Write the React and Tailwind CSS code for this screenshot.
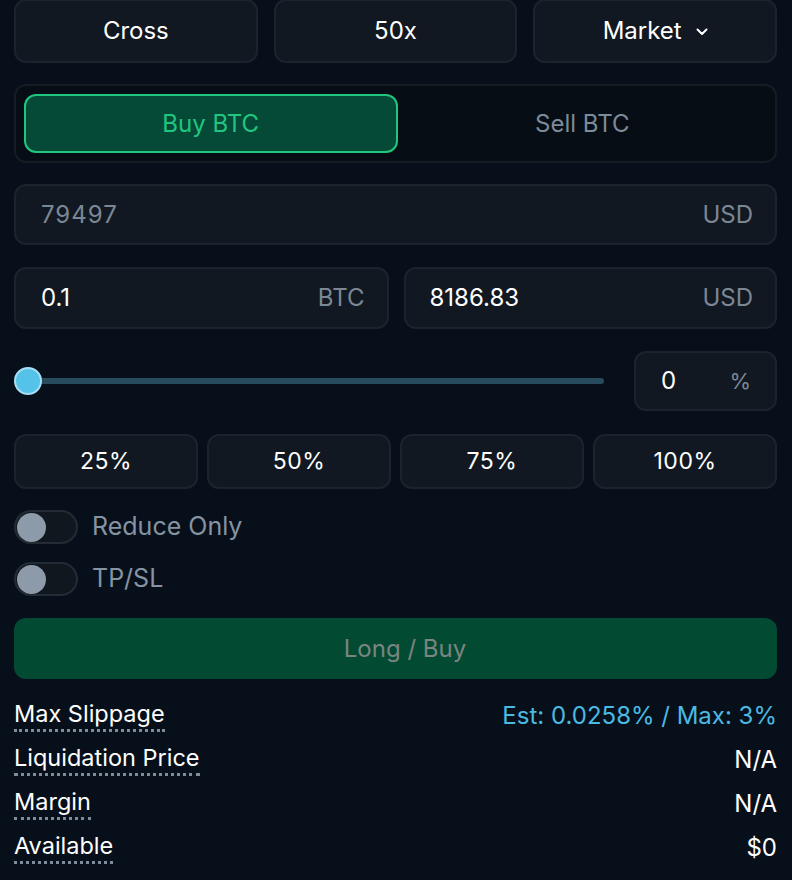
import React, { useState } from 'react';

const box = 'bg-[#111821] border-2 border-[#1c232c] rounded-[12px]';

function Toggle({ label }) {
  return (
    <div className="flex items-center h-[34px]">
      <div className="w-[64px] h-[34px] rounded-full bg-[#10171f] border-2 border-[#232b34] flex items-center px-[1px]">
        <div className="w-[29px] h-[29px] rounded-full bg-[#8d9aa9]" />
      </div>
      <span className="ml-[14px] text-[25px] text-[#8593a2]">{label}</span>
    </div>
  );
}

function InfoRow({ label, value, valueClass }) {
  return (
    <div className="flex items-center justify-between h-[44px]">
      <span className="text-[23.5px] text-white leading-[28px] border-b-[3px] border-dotted border-[#7e8d9c] pb-[1px]">
        {label}
      </span>
      <span className={`text-[24px] leading-[28px] ${valueClass}`}>{value}</span>
    </div>
  );
}

export default function App() {
  const [side, setSide] = useState('buy');
  const pcts = ['25%', '50%', '75%', '100%'];

  return (
    <div
      className="w-[792px] h-[880px] bg-[#07101a] px-[14px] pr-[15px] overflow-hidden"
      style={{ fontFamily: 'Inter, "Noto Sans", sans-serif' }}
    >
      {/* margin / leverage / order type */}
      <div className="flex gap-[16px] h-[64px] -mt-[1px]">
        <button className={`${box} flex-1 text-white text-[24px]`}>Cross</button>
        <button className={`${box} flex-1 text-white text-[24px]`}>50x</button>
        <button className={`${box} flex-1 text-white text-[24px] flex items-center justify-center gap-[14px]`}>
          Market
          <svg width="12" height="8" viewBox="0 0 12 8" fill="none" className="mt-[2px]">
            <path d="M1.5 1.5L6 6L10.5 1.5" stroke="white" strokeWidth="2" strokeLinecap="round" strokeLinejoin="round" />
          </svg>
        </button>
      </div>

      {/* buy / sell tabs */}
      <div className="mt-[21px] h-[79px] rounded-[12px] border-2 border-[#151c24] bg-[#060d15] p-[8px] flex">
        <button
          onClick={() => setSide('buy')}
          className={`flex-1 rounded-[12px] text-[24px] ${side === 'buy' ? 'bg-[#054a37] border-2 border-[#20c67d] text-[#21c57f]' : 'text-[#7d8a99]'}`}
        >
          Buy BTC
        </button>
        <button
          onClick={() => setSide('sell')}
          className={`flex-1 rounded-[12px] text-[24px] ${side === 'sell' ? 'bg-[#4a0f16] border-2 border-[#e5484d] text-[#e5484d]' : 'text-[#7d8a99]'}`}
        >
          Sell BTC
        </button>
      </div>

      {/* price */}
      <div className={`${box} mt-[21px] h-[61px] flex items-center justify-between pl-[25px] pr-[22px]`}>
        <span className="text-[24px] text-[#7b8795] tracking-[1px]">79497</span>
        <span className="text-[24px] text-[#7b8795]">USD</span>
      </div>

      {/* size */}
      <div className="mt-[22px] flex gap-[15px] h-[62px]">
        <div className={`${box} flex-1 flex items-center justify-between pl-[25px] pr-[22px]`}>
          <span className="text-[24px] text-white">0.1</span>
          <span className="text-[24px] text-[#7b8795]">BTC</span>
        </div>
        <div className={`${box} flex-1 flex items-center justify-between pl-[24px] pr-[22px]`}>
          <span className="text-[24px] text-white">8186.83</span>
          <span className="text-[24px] text-[#7b8795]">USD</span>
        </div>
      </div>

      {/* slider */}
      <div className="mt-[22px] flex items-center h-[60px]">
        <div className="flex-1 relative h-[28px] flex items-center">
          <div className="ml-[14px] flex-1 h-[6px] rounded-full bg-[#274a5c]" />
          <div className="absolute left-0 top-0 w-[28px] h-[28px] rounded-full bg-[#55c2ea] border-2 border-[#a6def3]" />
        </div>
        <div className={`${box} ml-[30px] w-[143px] h-[60px] flex items-center justify-between pl-[25px] pr-[24px]`}>
          <span className="text-[24px] text-white">0</span>
          <span className="text-[22px] text-[#7b8795]">%</span>
        </div>
      </div>

      {/* quick percentages */}
      <div className="mt-[23px] grid grid-cols-4 gap-[9px] h-[55px]">
        {pcts.map((p) => (
          <button key={p} className={`${box} text-white text-[23px] tracking-[0.5px]`}>
            {p}
          </button>
        ))}
      </div>

      {/* toggles */}
      <div className="mt-[21px] flex flex-col gap-[18px]">
        <Toggle label="Reduce Only" />
        <Toggle label="TP/SL" />
      </div>

      {/* submit */}
      <button className="mt-[22px] w-full h-[61px] rounded-[12px] bg-[#034a33] text-[24px] text-[#7a8581] pl-[19px]">
        Long / Buy
      </button>

      {/* info */}
      <div className="mt-[15px] flex flex-col">
        <InfoRow label="Max Slippage" value="Est: 0.0258% / Max: 3%" valueClass="text-[#4cb9e2]" />
        <InfoRow label="Liquidation Price" value="N/A" valueClass="text-white" />
        <InfoRow label="Margin" value="N/A" valueClass="text-white" />
        <InfoRow label="Available" value="$0" valueClass="text-white" />
      </div>
    </div>
  );
}
